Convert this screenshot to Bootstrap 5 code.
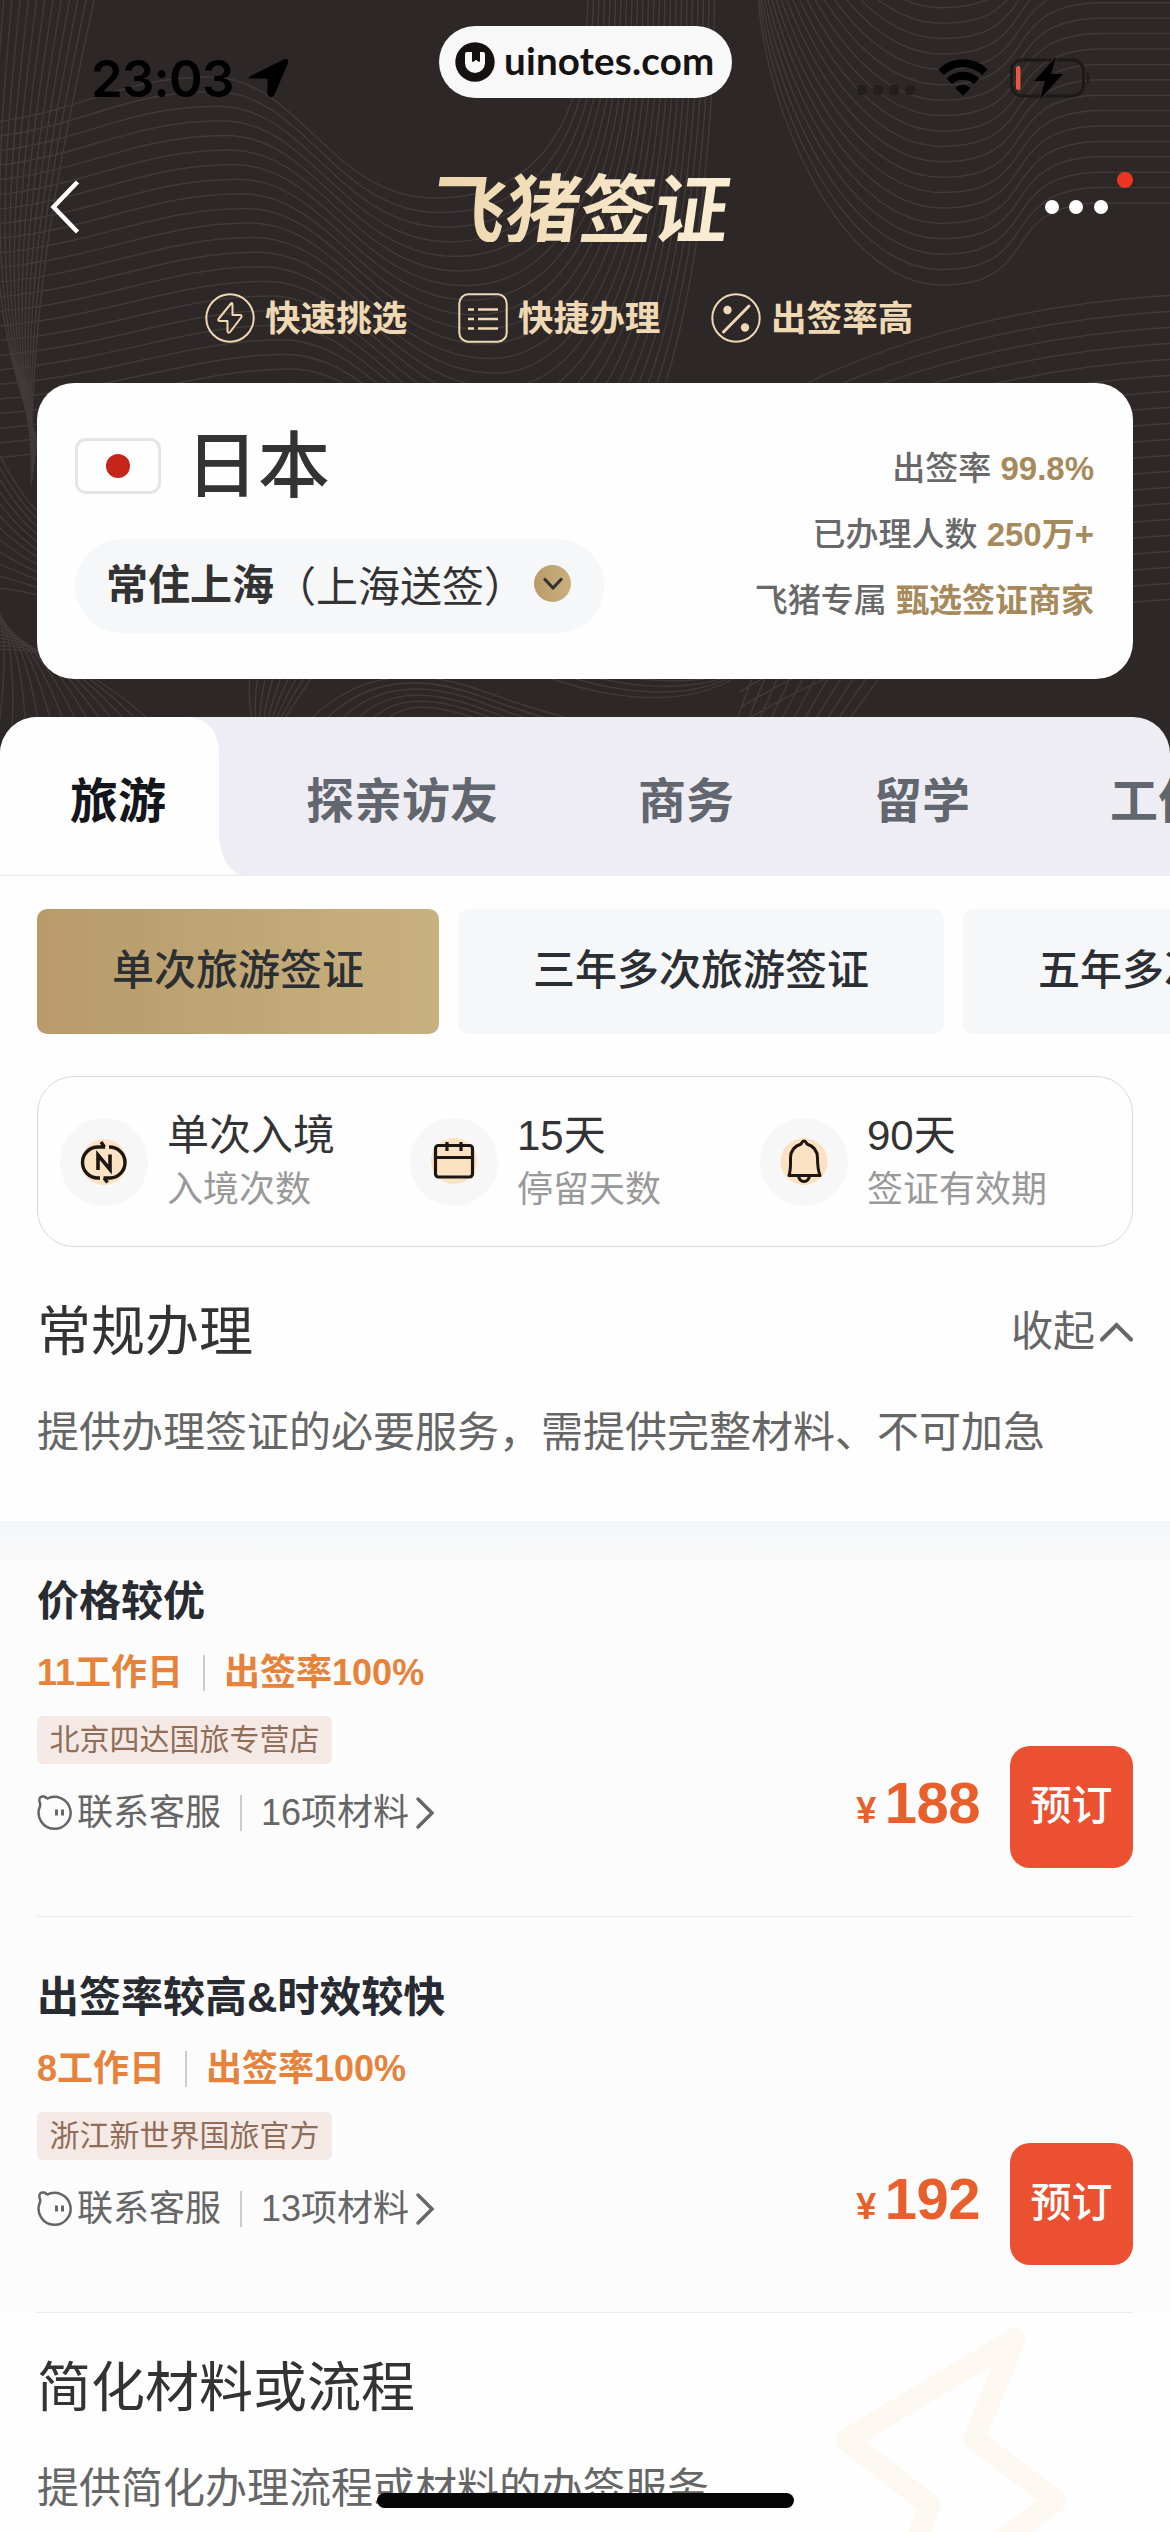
<!DOCTYPE html>
<html lang="zh-CN">
<head>
<meta charset="utf-8">
<meta name="viewport" content="width=device-width, initial-scale=1">
<title>飞猪签证</title>
<link href="https://cdn.jsdelivr.net/npm/bootstrap@5.3.0/dist/css/bootstrap.min.css" rel="stylesheet">
<style>
  :root { --gold: #a68a5c; --cream: #efd9b4; --ink: #333; --soft: #666; }
  body { width: 1170px; height: 2532px; overflow: hidden; background: #fefefe; color: var(--ink);
    font-family: "Liberation Sans", "Noto Sans CJK SC", sans-serif; font-size: 42px; line-height: 1; white-space: nowrap; }
  svg { display: block; flex: none; }
  .app { width: 1170px; height: 2532px; overflow: hidden; }
  .hero { height: 717px; }
  .hero-art { left: 0; top: 0; width: 1170px; height: 790px; background: #2d2727; z-index: -1; }
  .status { height: 156px; padding: 0 78px 0 91px; color: #000; }
  .clock { font: 600 51px/1 Inter, sans-serif; letter-spacing: -.8px; }
  .site-pill { left: 439px; top: 26px; width: 293px; height: 72px; background: #f8f8f8; color: #161313; padding-left: 16px; gap: 9px;
    font: 700 38.5px/1 Lato, sans-serif; }
  .site-pill span { margin-top: -4px; letter-spacing: .2px; }
  .topnav { height: 102px; padding: 0 62px 0 49px; }
  .logo-text { font: 700 75px/1 "Noto Sans CJK SC", sans-serif; letter-spacing: -.5px; transform: skewX(-8deg); margin: -6px 0 0 36px;
    background: linear-gradient(90deg, #ecd6ac, #fbeed6); -webkit-background-clip: text; background-clip: text; color: transparent; }
  .more-dot { width: 14px; height: 14px; background: #fff; }
  .alert-dot { width: 16px; height: 16px; background: #ee3524; right: 37px; top: 16px; }
  .perks { padding: 30px 0 35px 205px; gap: 49px; height: 125px; color: var(--cream); font-size: 35.6px; font-weight: 600; }
  .perk { gap: 10px; width: 204px; }
  .perk span { padding-top: 3px; }
  .country { margin: 0 37px; height: 296px; border-radius: 37px; background: #fefefe; padding: 37px 39px 46px 38px; }
  .flag { width: 86px; height: 56px; border: 3px solid #e5e5e5; border-radius: 11px; }
  .flag i { width: 24px; height: 24px; background: #c4261a; }
  .country-name { font-size: 72px; font-weight: 500; }
  .city { width: 529px; height: 94px; background: #f6f7f9; padding: 0 33px 3px 31px; }
  .city b { padding-top: 2px; }
  .city-arrow { width: 37px; height: 37px; background: linear-gradient(90deg, #b99b69, #c9b17f); margin-top: -2px; }
  .facts { font-size: 33px; line-height: 66px; font-weight: 500; color: #686868; padding-top: 16px; }
  .facts b { color: var(--gold); font-weight: 600; }
  .kinds { height: 159px; background: #eeedf4; border-radius: 37px 37px 0 0; overflow: hidden; font-size: 48px; font-weight: 700; color: #62666e;
    padding: 10px 0 0 70px; gap: 140px; }
  .kinds .active-bg { left: 0; top: 0; }
  .kinds span { position: relative; }
  .kinds .on { color: #14161b; }
  .chips { padding: 33px 0 0 37px; gap: 19px; }
  .chip { height: 125px; border-radius: 10px; background: #f6f7f9; padding: 0 75px 2px; color: #2b2e33; font-weight: 500; flex: none; }
  .chip.on { background: linear-gradient(90deg, #b79b6a, #c8b180); }
  .terms { margin: 42px 37px 0; height: 171px; border: 1.5px solid #dadada; border-radius: 37px; padding: 0 0 0 22px; }
  .term { width: 350px; gap: 19px; padding-top: 0; }
  .term small { font-size: 36px; color: #999; }
  .term div div { height: 52px; line-height: 52px; }
  .sec-title { font-size: 54px; }
  .sec-head { padding: 0 37px; height: 54px; }
  .sec-desc { padding: 1px 37px 0; line-height: 42px; height: 42px; color: var(--soft); }
  .band { height: 40px; background: linear-gradient(#f5f6f8, #fafafa); margin-top: 68px; }
  .offers { background: #fcfcfc; }
  .offer { height: 396px; margin: 0 37px; border-bottom: 1.5px solid #ececec; }
  .offer:first-child { height: 356px; }
  .offer:last-child .offer-body { padding-top: 60px; }
  .offer-body { padding-top: 20px; }
  .offer h3 { font-size: 42px; line-height: 42px; font-weight: 600; color: #282b31; margin: 0 0 31px; }
  .meta { font-size: 36px; font-weight: 600; color: #e68239; height: 38px; }
  .sep { width: 2px; height: 36px; background: #ccc; margin: 0 19px 0 20px; }
  .shop { width: 295px; height: 48px; border-radius: 6px; background: #f4e9e4; color: #8f6d59; font-size: 30px; margin: 24px 0 30px; padding-bottom: 1px; }
  .links { font-size: 36px; color: var(--soft); height: 38px; }
  .links .sep { margin-left: 19px; }
  .price { color: #e95f2b; font-weight: 700; font-size: 58px; margin-top: -9px; letter-spacing: -.5px; }
  .price small { font-size: 36px; font-weight: 700; margin-right: 9px; }
  .buy { width: 123px; height: 122px; border-radius: 20px; background: #eb5031; color: #fff; font-size: 41px; font-weight: 500; padding: 0 0 1px; border: 0; line-height: 1; }
  .next-sec { padding-top: 48px; height: 221px; }
  .watermark { left: 820px; top: 0; }
  .home-bar { left: 377px; top: 2493px; width: 417px; height: 15px; background: #060606; }
</style>
</head>
<body>
<div class="app position-relative">
  <header class="hero position-relative">
    <svg class="hero-art position-absolute" id="art" viewBox="0 0 1170 790" fill="none" stroke="#3f3a38" stroke-width="1.500"></svg>

    <div class="status d-flex align-items-center">
      <span class="clock">23:03</span>
      <svg width="41" height="40" viewBox="0 0 41 40" style="margin-left:14px"><path d="M2.5 18.5 36 1.8Q40.500 0 39.500 5L26 36.500Q23.500 41 20 37V21.500Q19.500 20 18 20H4Q-1 20.500 2.500 18.500Z" fill="#000" stroke="#000"/></svg>
      <div class="d-flex align-items-center ms-auto">
        <svg width="58" height="12" viewBox="0 0 58 12" style="margin:26px 23px 0 0" fill="#241f1f"><rect width="10" height="10" rx="4"/><rect x="16" width="10" height="10" rx="4"/><rect x="32" width="10" height="10" rx="4"/><rect x="48" width="10" height="10" rx="4"/></svg>
        <svg width="50" height="38" viewBox="0 0 50 38" fill="none" stroke="#000" stroke-width="8"><path d="M3.200 13.300A31 31 0 0 1 46.800 13.300"/><path d="M11.500 22.500A19 19 0 0 1 38.500 22.500"/><path d="M25 37 17.300 29Q25 22.500 32.700 29Z" fill="#000" stroke="none"/></svg>
        <svg width="82" height="42" viewBox="0 0 82 42" style="margin-left:22px"><rect x="1.500" y="3" width="72" height="36" rx="11" fill="none" stroke="#1d1919" stroke-width="3"/><path d="M77 15q5 6 0 12z" fill="#1d1919"/><rect x="6" y="9" width="4.500" height="24" rx="2" fill="#ea5544"/><path d="M46 0 24 24H35L30 42 53 17H41Z" fill="#000" stroke="#2d2727" stroke-width="3" paint-order="stroke" stroke-linejoin="round"/></svg>
      </div>
    </div>
    <div class="site-pill position-absolute rounded-pill d-flex align-items-center">
      <svg width="40" height="40" viewBox="0 0 40 40"><circle cx="20" cy="20" r="19.700" fill="#161111"/><path d="M10 12Q10 10 12 10H17V20L21 17.500 25 20V10H28Q30 10 30 12V21A10 10 0 0 1 10 21Z" fill="#f8f8f8"/><path d="M18 10H24V20L21 17.700 18 20Z" fill="#161111"/></svg>
      <span>uinotes.com</span>
    </div>

    <nav class="topnav d-flex align-items-center justify-content-between position-relative">
      <svg width="32" height="54" viewBox="0 0 32 54" fill="none" stroke="#fff" stroke-width="4.500"><path d="M28.500 2 4.500 27 28.500 52"/></svg>
      <div class="logo-text">飞猪签证</div>
      <div class="d-flex" style="gap:10.500px"><i class="more-dot rounded-circle"></i><i class="more-dot rounded-circle"></i><i class="more-dot rounded-circle"></i></div>
      <i class="alert-dot rounded-circle position-absolute"></i>
    </nav>

    <div class="perks d-flex align-items-center">
      <div class="perk d-flex align-items-center"><svg width="50" height="50" viewBox="0 0 50 50" fill="none" stroke="#efd9b4" stroke-width="2"><circle cx="25" cy="25" r="23.700"/><path d="M26 10.500 13.500 26Q12.500 28 15 28H22.500V38.500Q23.500 41 25.500 38.500L36.500 24Q37 22 35 22H27.500V12Q27.500 9 26 10.500Z" stroke-linejoin="round"/></svg><span>快速挑选</span></div>
      <div class="perk d-flex align-items-center"><svg width="50" height="50" viewBox="0 0 50 50" fill="none" stroke="#efd9b4" stroke-width="2"><rect x="1.300" y="1.300" width="47.400" height="47.400" rx="9"/><path d="M10 16.500h6m4 0h20M10 26h6m4 0h20M10 35.500h6m4 0h20" stroke-width="2.400"/></svg><span>快捷办理</span></div>
      <div class="perk d-flex align-items-center"><svg width="50" height="50" viewBox="0 0 50 50" fill="none" stroke="#efd9b4" stroke-width="2"><circle cx="25" cy="25" r="23.700"/><path d="M12.500 39 38 13" stroke-width="3" stroke-linecap="round"/><circle cx="16.500" cy="17" r="4.200" fill="#efd9b4" stroke="none"/><circle cx="34" cy="34.500" r="4.200" fill="#efd9b4" stroke="none"/></svg><span>出签率高</span></div>
    </div>

    <section class="country d-flex justify-content-between">
      <div class="d-flex flex-column justify-content-between">
        <div class="d-flex align-items-center" style="gap:25px;height:92px">
          <span class="flag d-flex align-items-center justify-content-center"><i class="rounded-circle"></i></span>
          <span class="country-name">日本</span>
        </div>
        <div class="city rounded-pill d-flex align-items-center">
          <b>常住上海</b><span style="margin-top:7px">（上海送签）</span>
          <span class="city-arrow rounded-circle d-flex align-items-center justify-content-center ms-auto"><svg width="20" height="14" viewBox="0 0 20 14" fill="none" stroke="#333" stroke-width="3.200" stroke-linecap="round" stroke-linejoin="round"><path d="M2 2.500 10 11 18 2.500"/></svg></span>
        </div>
      </div>
      <div class="facts text-end">
        <div>出签率 <b>99.8%</b></div>
        <div>已办理人数 <b>250万+</b></div>
        <div>飞猪专属 <b>甄选签证商家</b></div>
      </div>
    </section>
  </header>

  <div class="kinds position-relative d-flex align-items-center">
    <svg class="active-bg position-absolute" width="245" height="159" viewBox="0 0 245 159"><path d="M0 0H190Q219 4 219 37V118Q221 150 241 158H0Z" fill="#fefefe"/><path d="M0 158.300H245" stroke="#ebebf2" stroke-width="1.500"/></svg>
    <span class="on">旅游</span><span>探亲访友</span><span>商务</span><span>留学</span><span>工作</span>
  </div>

  <div class="chips d-flex">
    <div class="chip on d-flex align-items-center">单次旅游签证</div>
    <div class="chip d-flex align-items-center">三年多次旅游签证</div>
    <div class="chip d-flex align-items-center">五年多次旅游签证</div>
  </div>

  <div class="terms d-flex align-items-center">
    <div class="term d-flex align-items-center">
      <svg width="88" height="88" viewBox="0 0 88 88" fill="none" stroke="#1c1712" stroke-width="3.400"><circle cx="44" cy="44" r="44" fill="#f7f7f7" stroke="none"/><circle cx="44" cy="44" r="23" fill="#fbe2c3" stroke="none"/><path d="M45 29H38A15.500 15.500 0 0 0 38 60H40M44.500 29 41 24M49 29A15.500 15.500 0 0 1 50 60H43.500M44 60 47.500 64.500"/><path d="M38 52V37L50 51.500V36.500" stroke-width="3.600"/></svg>
      <div><div>单次入境</div><div><small>入境次数</small></div></div>
    </div>
    <div class="term d-flex align-items-center">
      <svg width="88" height="88" viewBox="0 0 88 88" fill="none" stroke="#1c1712" stroke-width="3.200"><circle cx="44" cy="44" r="44" fill="#f7f7f7" stroke="none"/><circle cx="44" cy="43" r="23" fill="#fbe2c3" stroke="none"/><rect x="25.500" y="27.500" width="37" height="31.500" rx="3"/><path d="M25.500 39.500h37M37 24v9M51 24v9"/></svg>
      <div><div>15天</div><div><small>停留天数</small></div></div>
    </div>
    <div class="term d-flex align-items-center">
      <svg width="88" height="88" viewBox="0 0 88 88" fill="none" stroke="#1c1712" stroke-width="3"><circle cx="44" cy="44" r="44" fill="#f7f7f7" stroke="none"/><circle cx="44" cy="43.500" r="23.500" fill="#fbe2c3" stroke="none"/><path d="M29 57.500C31 51 30.500 47 30.500 40Q30.500 29.500 41 26Q44 20 47 26Q57.500 29.500 57.500 40C57.500 47 57.500 51 60 57.500Z" stroke-linejoin="round"/><path d="M38.500 58Q39.500 63.500 44 63.500T49.500 58"/></svg>
      <div><div>90天</div><div><small>签证有效期</small></div></div>
    </div>
  </div>

  <section>
    <div class="sec-head d-flex align-items-center justify-content-between" style="margin-top:58px">
      <div class="sec-title">常规办理</div>
      <div class="d-flex align-items-center" style="color:#666;gap:4px">收起<svg width="34" height="22" viewBox="0 0 34 22" fill="none" stroke="#666" stroke-width="4" stroke-linecap="round"><path d="M3 18.500 17.500 4 32 18.500"/></svg></div>
    </div>
    <div class="sec-desc" style="margin-top:52px">提供办理签证的必要服务，需提供完整材料、不可加急</div>
    <div class="band"></div>
  </section>

  <div class="offers">
    <article class="offer d-flex justify-content-between">
      <div class="offer-body">
        <h3>价格较优</h3>
        <div class="meta d-flex align-items-center">11工作日<i class="sep"></i>出签率100%</div>
        <div class="shop d-flex align-items-center justify-content-center">北京四达国旅专营店</div>
        <div class="links d-flex align-items-center"><svg width="36" height="38" viewBox="0 0 36 38" fill="none" stroke="#666" stroke-width="2.500" style="margin-right:4px"><path d="M9.500 5A16 16 0 1 1 2.500 13.500Q4 11 2.500 7.500Q1.500 2 7 2.500Q9.500 3 9.500 5"/><path d="M19.500 15.500v6M25.500 15.500v6" stroke-width="3"/></svg>联系客服<i class="sep"></i>16项材料<svg width="22" height="34" viewBox="0 0 22 34" fill="none" stroke="#666" stroke-width="3.500" stroke-linecap="round" style="margin-left:5px"><path d="M4 3 18 17 4 31"/></svg></div>
      </div>
      <div class="d-flex align-items-center" style="padding-top:137px;gap:30px"><div class="price"><small>¥</small>188</div><button class="buy">预订</button></div>
    </article>
    <article class="offer d-flex justify-content-between">
      <div class="offer-body">
        <h3>出签率较高&amp;时效较快</h3>
        <div class="meta d-flex align-items-center">8工作日<i class="sep"></i>出签率100%</div>
        <div class="shop d-flex align-items-center justify-content-center">浙江新世界国旅官方</div>
        <div class="links d-flex align-items-center"><svg width="36" height="38" viewBox="0 0 36 38" fill="none" stroke="#666" stroke-width="2.500" style="margin-right:4px"><path d="M9.500 5A16 16 0 1 1 2.500 13.500Q4 11 2.500 7.500Q1.500 2 7 2.500Q9.500 3 9.500 5"/><path d="M19.500 15.500v6M25.500 15.500v6" stroke-width="3"/></svg>联系客服<i class="sep"></i>13项材料<svg width="22" height="34" viewBox="0 0 22 34" fill="none" stroke="#666" stroke-width="3.500" stroke-linecap="round" style="margin-left:5px"><path d="M4 3 18 17 4 31"/></svg></div>
      </div>
      <div class="d-flex align-items-center" style="padding-top:178px;gap:30px"><div class="price"><small>¥</small>192</div><button class="buy">预订</button></div>
    </article>
  </div>

  <section class="next-sec position-relative">
    <svg class="watermark position-absolute" width="260" height="221" viewBox="0 0 260 221" fill="none" stroke="#fdf9f2" stroke-width="22" stroke-linejoin="round"><path d="M88 250 110 192 26 127 195 26 154 126 236 188 150 250"/></svg>
    <div class="sec-head d-flex align-items-center position-relative"><div class="sec-title">简化材料或流程</div></div>
    <div class="sec-desc position-relative" style="margin-top:52px">提供简化办理流程或材料的办签服务</div>
  </section>
  <div class="home-bar position-absolute rounded-pill"></div>
</div>

<script>
  // Contour lines behind the header, one family of shifted curves per loop.
  var d = [], i, s;
  for (i = 0; i < 24; i++) {
    s = 14.6 * i;
    d.push(`M-5 ${122+s}C${80+2*i} ${112+s} ${120+4*i} ${77+s} ${210+4*i} ${77+s}S${330+5*i} ${198+s} ${435+5*i} ${198+s}S${588+5.5*i} ${120+6*i} ${588+5.5*i} -10`);
  }
  for (i = 0; i < 12; i++) d.push(`M${4+8.3*i} -5C${-6+6.5*i} 130 ${-22+4.6*i} 300 ${38-.6*i} ${440+4*i}`);
  for (i = 0; i < 22; i++) {
    s = -15.4 * i;
    d.push(`M758 ${-5+s}C765 ${110+s} 840 ${285+s} 942 ${285+s}S995 ${205+s} 1100 ${203+s}T1175 ${203+s}`);
  }
  for (i = 0; i < 20; i++) d.push(`M740 ${420+16*i}C860 ${345+16*i} 1010 ${305+16*i} 1175 ${295+16*i}`);
  for (i = 0; i < 12; i++) d.push(`M-5 ${445+13*i}Q15 ${490+9*i} 45 ${520+7*i}`);
  for (i = 0; i < 14; i++) d.push(`M-5 ${598+4*i}Q${10+6*i} 640 ${-30+19*i} 790`);
  for (i = 0; i < 9; i++) d.push(`M${250+8*i} 675Q${248+6*i} 700 ${252+4*i} 720`);
  for (i = 0; i < 6; i++) d.push(`M${300+16*i} 730Q${370+6*i} ${650+8*i} 480 ${690+6*i}T640 ${730+8*i}`);
  for (i = 0; i < 5; i++) d.push(`M${500+22*i} 655C${580+5*i} ${700-6*i} ${690+5*i} ${716-9*i} ${745-4*i} 670`);
  for (i = 0; i < 11; i++) d.push(`M${755+13*i} 670L${735+11*i} 725`);
  document.getElementById('art').innerHTML = `<path d="${d.join('')}"/>`;
</script>
<script src="https://cdn.jsdelivr.net/npm/bootstrap@5.3.0/dist/js/bootstrap.bundle.min.js"></script>
</body>
</html>
